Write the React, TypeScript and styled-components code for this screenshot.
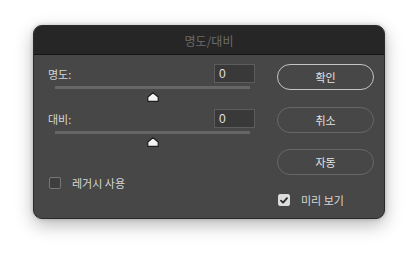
import styled, { createGlobalStyle } from "styled-components";

const GlobalStyle = createGlobalStyle`
    html, body {
        margin: 0;
        padding: 0;
        background: #ffffff;
    }
    body {
        font-family: "Noto Sans CJK KR", "Noto Sans", sans-serif;
    }
`;

const Page = styled.div`
    width: 418px;
    height: 261px;
    padding: 25px 0 0 33px;
    box-sizing: border-box;
`;

const Dialog = styled.div`
    width: 352px;
    height: 194px;
    background: #474747;
    border-radius: 9px;
    border: 1px solid #2a2a2a;
    box-sizing: border-box;
    overflow: hidden;
    box-shadow: 0 6px 18px rgba(0, 0, 0, 0.28), 0 0 4px rgba(0, 0, 0, 0.2);
    display: flex;
    flex-direction: column;
`;

const TitleBar = styled.div`
    height: 29px;
    flex-shrink: 0;
    background: #262626;
    border-bottom: 1px solid #141414;
    display: flex;
    align-items: center;
    justify-content: center;
    color: #6b6b6b;
    font-size: 12px;
    box-sizing: border-box;
`;

const Body = styled.div`
    flex: 1;
    display: flex;
    padding: 9px 9px 0 14px;
    gap: 22px;
`;

const LeftColumn = styled.div`
    width: 207px;
    display: flex;
    flex-direction: column;
`;

const RightColumn = styled.div`
    width: 97px;
    display: flex;
    flex-direction: column;
`;

const FieldRow = styled.div`
    height: 19px;
    display: flex;
    align-items: center;
    justify-content: space-between;
`;

const Label = styled.span`
    color: #d6d6d6;
    font-size: 11px;
`;

const NumberBox = styled.div`
    width: 41px;
    height: 19px;
    box-sizing: border-box;
    border: 1px solid #5c5c5c;
    background: #393939;
    color: #e2e2e2;
    font-size: 12px;
    font-family: "Liberation Sans", sans-serif;
    padding-left: 4px;
    display: flex;
    align-items: center;
`;

const Slider = styled.div`
    position: relative;
    margin: 3px 5px 0 7px;
    height: 23px;
`;

const Track = styled.div`
    height: 3px;
    background: #666666;
`;

const Thumb = styled.svg`
    position: absolute;
    top: 6px;
    transform: translateX(-50%);
`;

const Check = styled.div<{ $checked?: boolean }>`
    width: 12px;
    height: 12px;
    box-sizing: border-box;
    border-radius: 2px;
    border: 1px solid ${(p) => (p.$checked ? "#d8d8d8" : "#777777")};
    background: ${(p) => (p.$checked ? "#dcdcdc" : "#3e3e3e")};
    display: flex;
    align-items: center;
    justify-content: center;
`;

const CheckRow = styled.div<{ $top: number }>`
    display: flex;
    align-items: center;
    gap: 11px;
    height: 16px;
    margin-top: ${(p) => p.$top}px;
    padding-left: 1px;
    color: #d6d6d6;
    font-size: 11px;
`;

const Button = styled.div<{ $primary?: boolean; $top: number }>`
    height: 26px;
    box-sizing: border-box;
    margin-top: ${(p) => p.$top}px;
    border-radius: 13px;
    border: ${(p) => (p.$primary ? "1.5px solid #c4c4c4" : "1px solid #676767")};
    color: #e4e4e4;
    font-size: 11px;
    display: flex;
    align-items: center;
    justify-content: center;
`;

const SliderField = ({ label, value }: { label: string; value: number }) => (
    <div>
        <FieldRow>
            <Label>{label}</Label>
            <NumberBox>{value}</NumberBox>
        </FieldRow>
        <Slider>
            <Track />
            <Thumb width="12" height="10" viewBox="0 0 12 10" style={{ left: "50%" }}>
                <polygon points="6,0.7 11.2,5 11.2,9.3 0.8,9.3 0.8,5" fill="#f4f4f4" stroke="#1e1e1e" strokeWidth="1.2" strokeLinejoin="round" />
            </Thumb>
        </Slider>
    </div>
);

const App = () => {
    return (
        <>
            <GlobalStyle />
            <Page>
                <Dialog>
                    <TitleBar>명도/대비</TitleBar>
                    <Body>
                        <LeftColumn>
                            <SliderField label="명도:" value={0} />
                            <SliderField label="대비:" value={0} />
                            <CheckRow $top={21}>
                                <Check />
                                <span>레거시 사용</span>
                            </CheckRow>
                        </LeftColumn>
                        <RightColumn>
                            <Button $primary $top={0}>확인</Button>
                            <Button $top={17}>취소</Button>
                            <Button $top={16}>자동</Button>
                            <CheckRow $top={17}>
                                <Check $checked>
                                    <svg width="8" height="7" viewBox="0 0 8 7">
                                        <path d="M1 3.6 L3.1 5.6 L7 1.2" fill="none" stroke="#2b2b2b" strokeWidth="1.8" strokeLinecap="round" strokeLinejoin="round" />
                                    </svg>
                                </Check>
                                <span>미리 보기</span>
                            </CheckRow>
                        </RightColumn>
                    </Body>
                </Dialog>
            </Page>
        </>
    );
};

export default App;
